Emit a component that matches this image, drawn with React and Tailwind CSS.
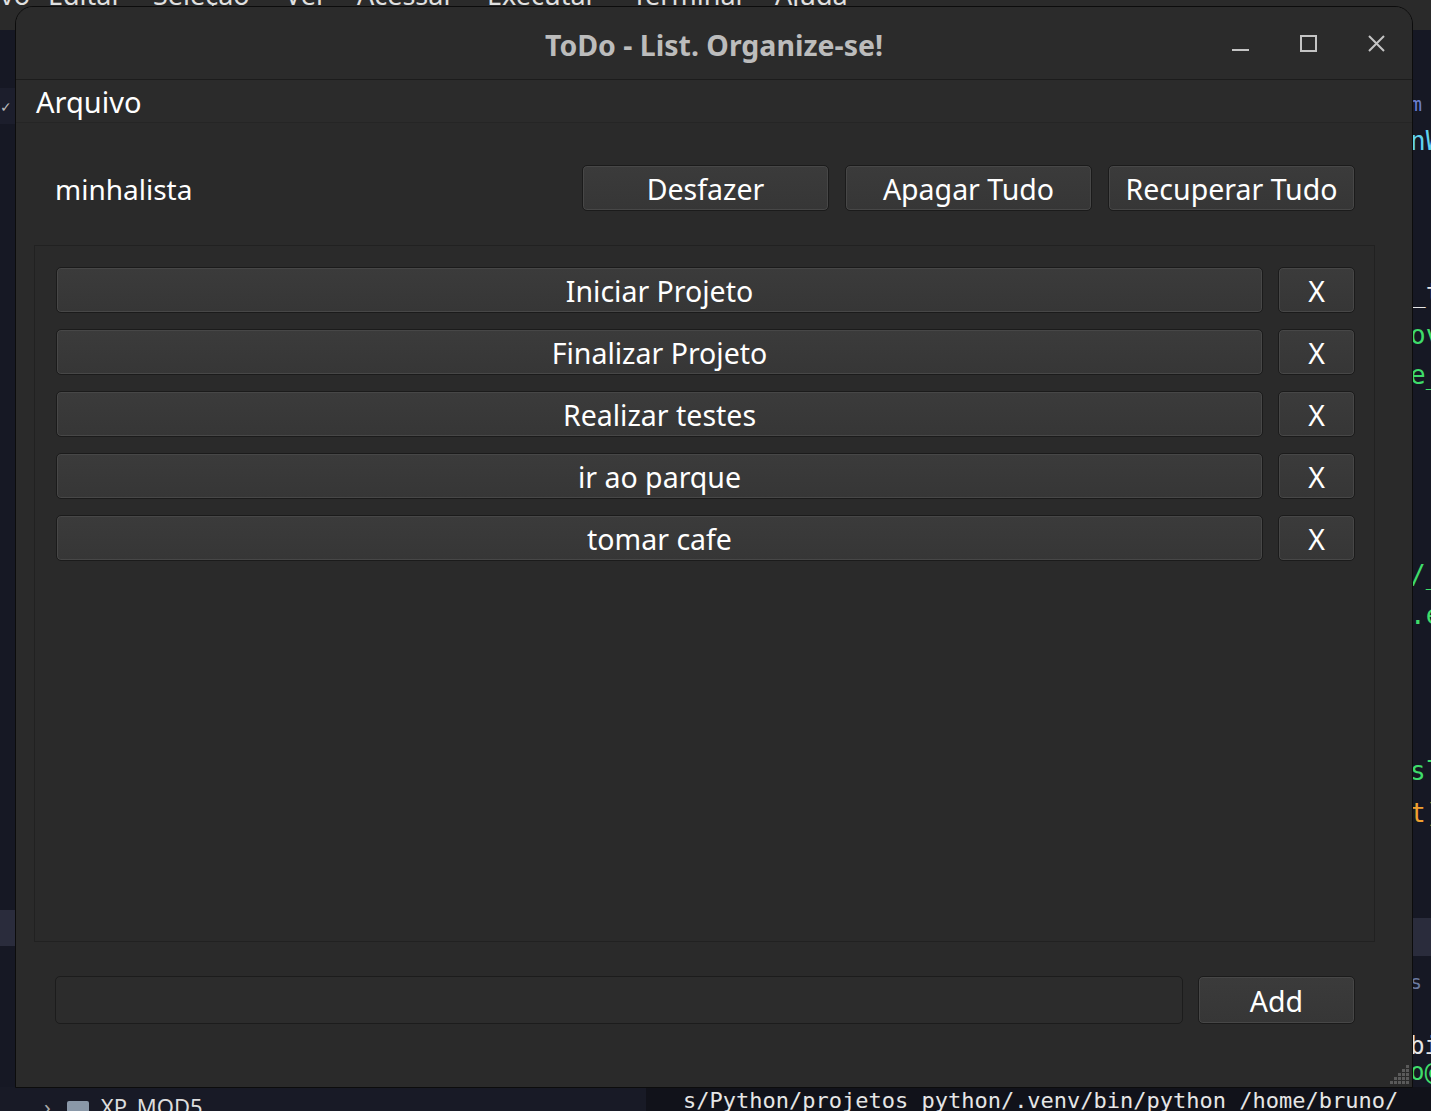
import React from "react";

const F = { fontFamily: '"Noto Sans", "Open Sans", sans-serif' };

function Btn({ children, className = "" }) {
  return (
    <div
      className={
        "flex items-center justify-center rounded-[5px] border border-[#1b1b1b] bg-[linear-gradient(#3b3b3b,#363636)] pt-[2px] text-[28.5px] text-white shadow-[inset_0_0_0_1px_#474747] " +
        className
      }
    >
      {children}
    </div>
  );
}

function Grip() {
  const pts = [
    [12, 0],
    [8, 4], [12, 4],
    [4, 8], [8, 8], [12, 8],
    [0, 12], [4, 12], [8, 12], [12, 12],
    [-4, 16], [0, 16], [4, 16], [8, 16], [12, 16],
  ];
  return (
    <svg width="22" height="22" viewBox="-6 -2 22 22" className="absolute bottom-[2px] right-[2px]">
      {pts.map(([x, y], i) => (
        <rect key={i} x={x} y={y} width="3" height="3" fill="#5a5a5a" />
      ))}
    </svg>
  );
}

export default function App() {
  const items = ["Iniciar Projeto", "Finalizar Projeto", "Realizar testes", "ir ao parque", "tomar cafe"];
  const menu = [
    ["vo", 0],
    ["Editar", 48],
    ["Seleção", 153],
    ["Ver", 285],
    ["Acessar", 357],
    ["Executar", 487],
    ["Terminal", 632],
    ["Ajuda", 775],
  ];
  const code = [
    ["m", 94, "#6a7fd0", 20],
    ["nW", 128, "#5fd3f0", 26],
    ["_t", 280, "#e6e6e6", 26],
    ["ov", 322, "#3fdc6a", 26],
    ["e_", 362, "#3fdc6a", 26],
    ["/_", 562, "#3fdc6a", 26],
    [".e", 602, "#3fdc6a", 26],
    ["sl", 758, "#3fdc6a", 26],
    ["t)", 800, "#f0a030", 26],
    ["s", 972, "#6a7aa0", 20],
    ["bi", 1034, "#e6e6e6", 24],
    ["o@", 1060, "#3fdc6a", 24],
  ];
  return (
    <div className="relative h-[1111px] w-[1431px] overflow-hidden bg-[#161824]" style={F}>
      {/* desktop / vscode background */}
      <div className="absolute left-0 top-0 h-[30px] w-full bg-[#2a2a2a]" />
      {menu.map(([t, x]) => (
        <div
          key={t}
          className="absolute top-[-19px] text-[27px] leading-none text-[#e0e0e0]"
          style={{ left: x }}
        >
          {t}
        </div>
      ))}
      <div className="absolute left-0 top-[88px] flex h-[36px] w-[16px] items-center bg-[#1c1e2c] text-[14px] text-[#bbbbbb]">
        ✓
      </div>
      <div className="absolute left-0 top-[910px] h-[36px] w-[16px] bg-[#2a2c3c]" />
      <div className="absolute right-0 top-[918px] h-[38px] w-[20px] bg-[#2a2c3c]" />
      {code.map(([t, y, c, s]) => (
        <div
          key={t + y}
          className="absolute left-[1410px] leading-none"
          style={{ top: y, color: c, fontSize: s, fontFamily: '"DejaVu Sans Mono", monospace' }}
        >
          {t}
        </div>
      ))}
      <div className="absolute bottom-0 left-0 flex h-[24px] w-[646px] items-start bg-[#181a26] pl-[44px] pt-[8px] text-[22px] leading-none text-[#dddddd]">
        <span className="mr-[16px] text-[#aaaaaa]">›</span>
        <span className="mr-[12px] mt-[6px] inline-block h-[16px] w-[22px] rounded-[2px] bg-[#8a98a8]" />
        <span>XP_MOD5</span>
      </div>
      <div
        className="absolute bottom-0 left-[646px] right-0 flex h-[24px] items-start bg-[#11121a] pl-[37px] pt-[3px] text-[22px] leading-none text-[#e6e6e6]"
        style={{ fontFamily: '"DejaVu Sans Mono", monospace' }}
      >
        s/Python/projetos python/.venv/bin/python /home/bruno/
      </div>

      {/* window */}
      <div className="absolute left-[15px] top-[6px] flex h-[1082px] w-[1398px] flex-col overflow-hidden rounded-t-[18px] border border-[#0c0c0c] bg-[#2a2a2a]">
        {/* title bar */}
        <div className="relative flex h-[73px] shrink-0 items-center justify-center border-b border-[#1c1c1c] bg-[#2b2b2b] pt-[4px]">
          <span className="text-[28.5px] font-bold text-[#bcbcbc]">ToDo - List. Organize-se!</span>
          <div className="absolute right-[27px] top-[29px] flex items-start gap-[51px]">
            <svg width="17" height="17" viewBox="0 0 17 17">
              <rect x="0" y="13" width="17" height="2" fill="#c4c4c4" />
            </svg>
            <svg width="17" height="17" viewBox="0 0 17 17" className="mt-[-1px]">
              <rect x="1" y="1" width="15" height="15" fill="none" stroke="#c4c4c4" strokeWidth="2" />
            </svg>
            <svg width="17" height="17" viewBox="0 0 17 17" className="mt-[-1px]">
              <path d="M1 1 L16 16 M16 1 L1 16" stroke="#c4c4c4" strokeWidth="2" />
            </svg>
          </div>
        </div>
        {/* menu bar */}
        <div className="flex h-[43px] shrink-0 items-center border-b border-[#252525] bg-[#2b2b2b] pl-[20px] pt-[2px] text-[29px] text-white">
          Arquivo
        </div>
        {/* content */}
        <div className="flex flex-1 flex-col pl-[18px] pr-[37px]">
          <div className="mt-[42px] flex h-[46px] items-center pl-[21px] pr-[20px]">
            <span className="flex-1 pt-[2px] text-[28px] text-white">minhalista</span>
            <div className="flex gap-[16px]">
              <Btn className="h-[46px] w-[247px]">Desfazer</Btn>
              <Btn className="h-[46px] w-[247px]">Apagar Tudo</Btn>
              <Btn className="h-[46px] w-[247px]">Recuperar Tudo</Btn>
            </div>
          </div>
          <div className="mt-[34px] flex h-[697px] flex-col gap-[16px] border border-[#212121] bg-[#2a2a2a] pb-[21px] pl-[21px] pr-[19px] pt-[21px]">
            {items.map((t) => (
              <div key={t} className="flex h-[46px] gap-[15px]">
                <Btn className="flex-1">{t}</Btn>
                <Btn className="w-[77px]">X</Btn>
              </div>
            ))}
          </div>
          <div className="mt-[34px] flex h-[48px] gap-[15px] pl-[21px] pr-[20px]">
            <div className="flex-1 rounded-[5px] border border-[#1c1c1c] bg-[#2c2c2c]" />
            <Btn className="w-[157px]">Add</Btn>
          </div>
        </div>
        <Grip />
      </div>
    </div>
  );
}
